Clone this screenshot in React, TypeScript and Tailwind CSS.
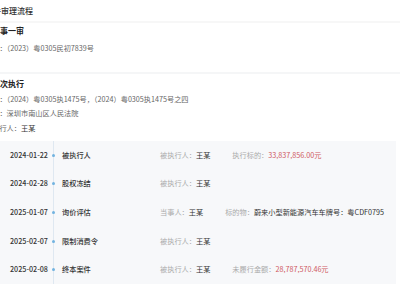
import React from "react";

const rows = [
  { date: "2024-01-22", title: "被执行人", label: "被执行人：", name: "王某", k2: "执行标的：", v2: "33,837,856.00元", red: true },
  { date: "2024-02-28", title: "股权冻结", label: "被执行人：", name: "王某" },
  { date: "2025-01-07", title: "询价评估", label: "当事人：", name: "王某", k2: "标的物：", v2: "蔚来小型新能源汽车车牌号：粤CDF0795", red: false },
  { date: "2025-02-07", title: "限制消费令", label: "被执行人：", name: "王某" },
  { date: "2025-02-08", title: "终本案件", label: "被执行人：", name: "王某", k2: "未履行金额：", v2: "28,787,570.46元", red: true },
];

export default function App() {
  return (
    <div
      className="w-[400px] h-[300px] bg-white overflow-hidden"
      style={{ fontFamily: '"Noto Sans CJK SC", "Noto Sans", sans-serif' }}
    >
      <div className="-ml-[15px] w-[415px]">
        <div className="h-[23px] flex items-center pl-[0px] text-[8px] font-medium text-[#333] border-b-2 border-[#f7f7f7]">
          案件审理流程
        </div>
        <div className="pb-[16px] border-b-2 border-[#f5f6f7]">
          <div className="h-[16px] flex items-center pl-[7px] text-[8px] font-bold text-[#222]">民事一审</div>
          <div className="mt-[2px] h-[15px] flex items-center text-[7.2px] text-[#666]">案号：（2023）粤0305民初7839号</div>
        </div>
        <div className="pt-[2px]">
          <div className="h-[16px] flex items-center pl-[7px] text-[8px] font-bold text-[#222]">首次执行</div>
          <div className="h-[14.5px] flex items-center text-[7.2px] text-[#666]">案号：（2024）粤0305执1475号，（2024）粤0305执1475号之四</div>
          <div className="h-[14.5px] flex items-center text-[7.2px] text-[#666]">法院：深圳市南山区人民法院</div>
          <div className="h-[14.5px] flex items-center text-[7.2px] text-[#666]">
            被执行人：<span className="text-[#333]">王某</span>
          </div>
        </div>
        <div className="mt-[5.5px] w-[411px] bg-[#f7f8fa] flex flex-col">
          {rows.map((r) => (
            <div key={r.date} className="h-[28.6px] flex items-center text-[7.2px]">
              <div className="w-[63px] pl-[25px] font-medium text-[#333]">{r.date}</div>
              <div className="relative w-[10px] h-full flex items-center justify-center">
                <div className="absolute left-[4.5px] top-0 bottom-0 w-px bg-[#dfe8f1]" />
                <div className="relative w-[3px] h-[3px] rounded-full bg-[#72b3e0]" />
              </div>
              <div className="w-[102px] pl-[4px] font-medium text-[#333]">{r.title}</div>
              <div className="flex items-center gap-[22px]">
                <div>
                  <span className="text-[#aaa]">{r.label}</span>
                  <span className="text-[#333]">{r.name}</span>
                </div>
                {r.k2 && (
                  <div>
                    <span className="text-[#aaa]">{r.k2}</span>
                    <span className={r.red ? "text-[#cf5a62]" : "text-[#333]"}>{r.v2}</span>
                  </div>
                )}
              </div>
            </div>
          ))}
        </div>
      </div>
    </div>
  );
}
